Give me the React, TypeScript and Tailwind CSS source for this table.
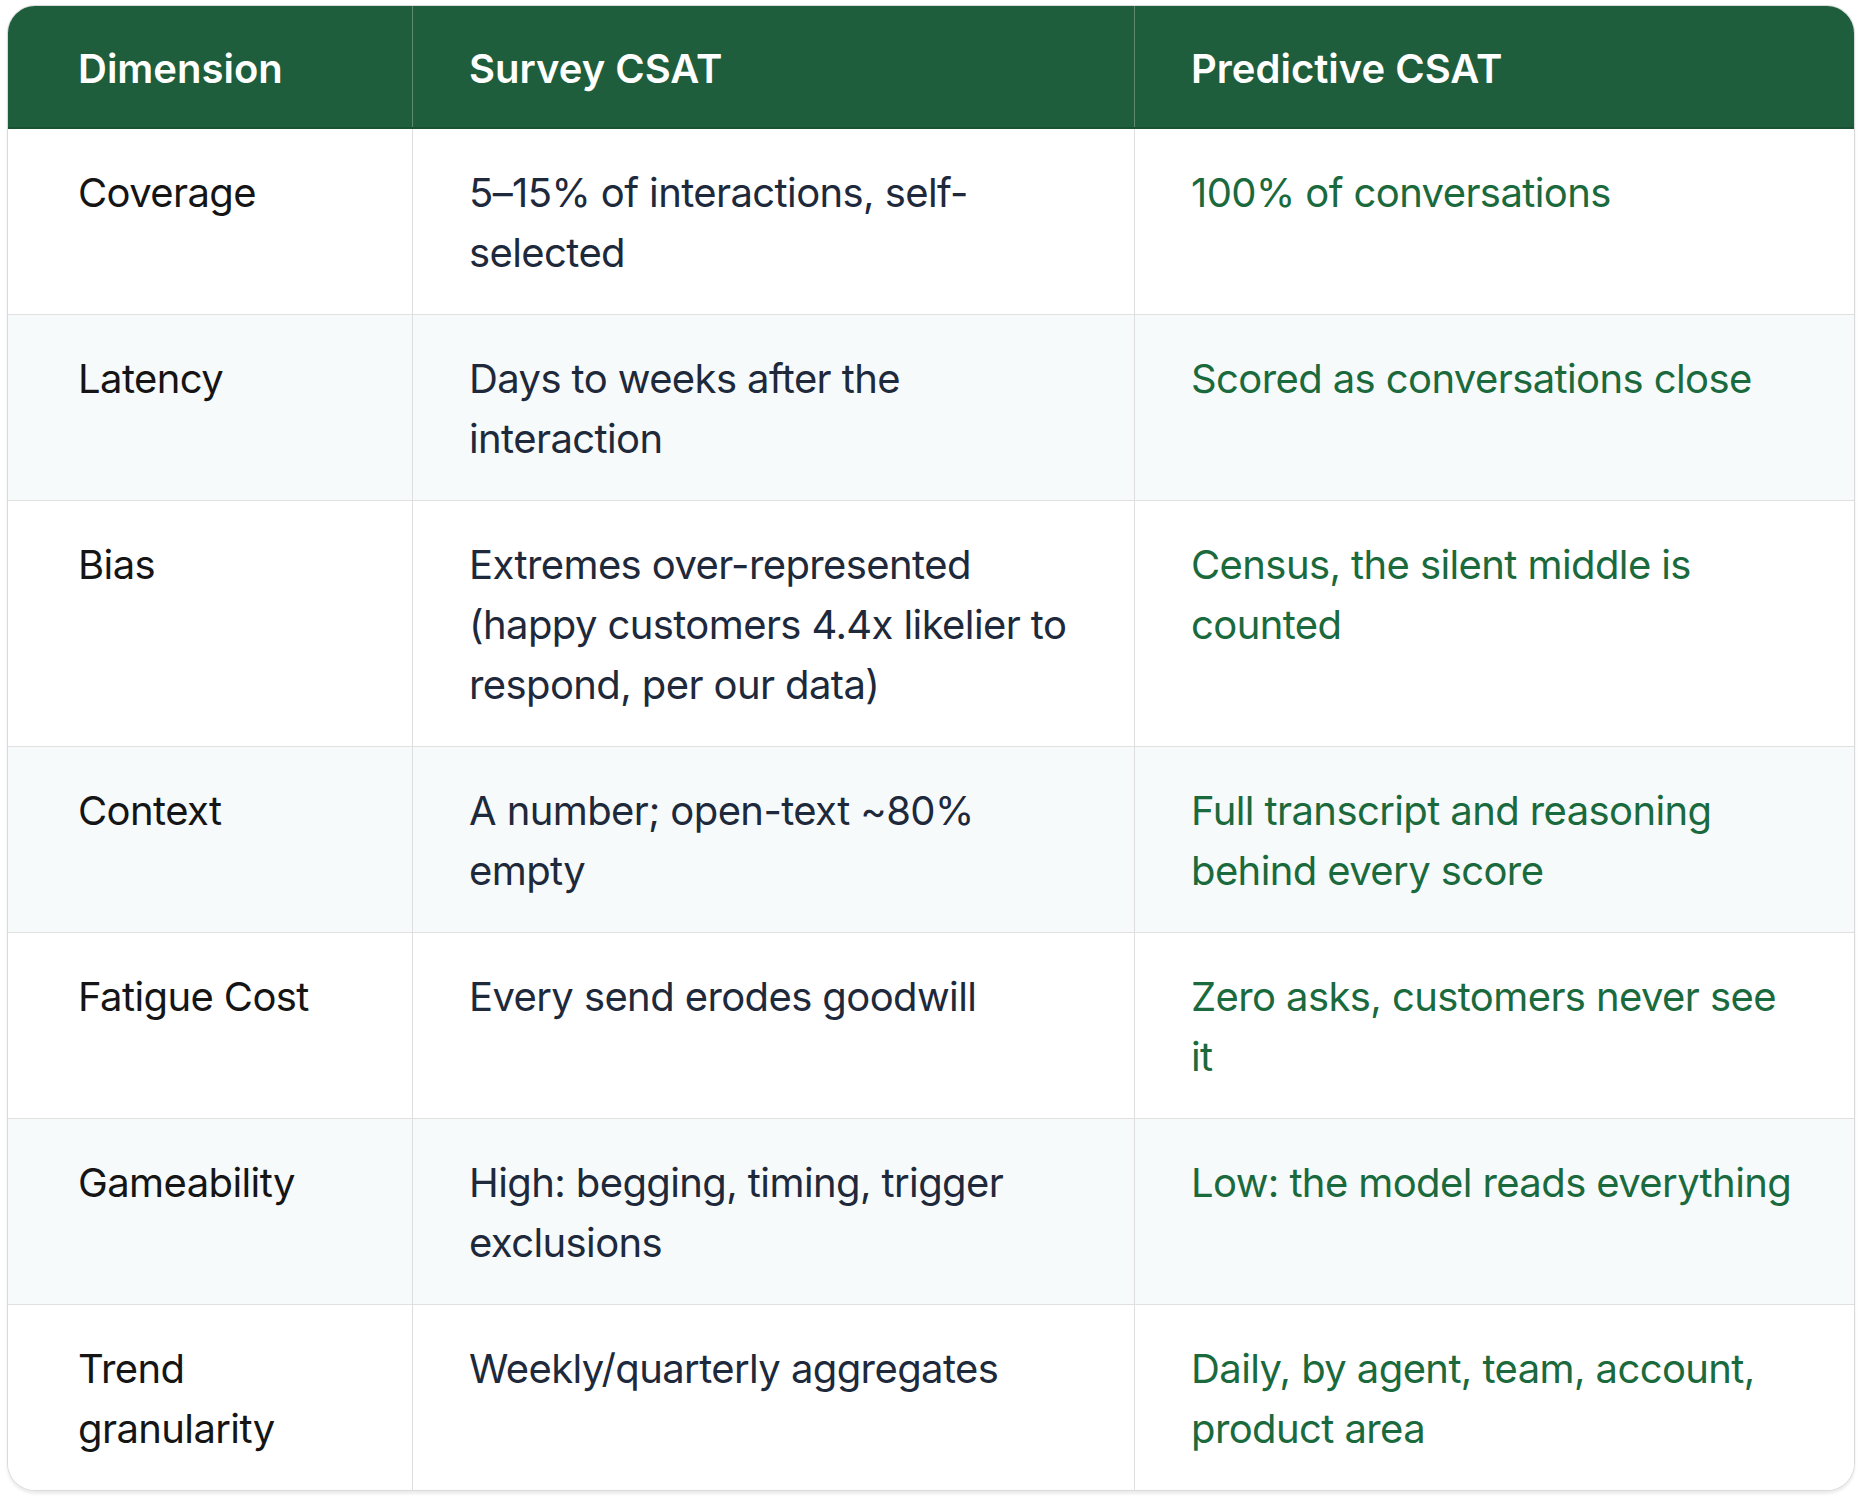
const rows: [string, string, string][] = [
  ['Coverage', '5–15% of interactions, self-selected', '100% of conversations'],
  ['Latency', 'Days to weeks after the interaction', 'Scored as conversations close'],
  [
    'Bias',
    'Extremes over-represented (happy customers 4.4x likelier to respond, per our data)',
    'Census, the silent middle is counted',
  ],
  ['Context', 'A number; open-text ~80% empty', 'Full transcript and reasoning behind every score'],
  ['Fatigue Cost', 'Every send erodes goodwill', 'Zero asks, customers never see it'],
  ['Gameability', 'High: begging, timing, trigger exclusions', 'Low: the model reads everything'],
  ['Trend granularity', 'Weekly/quarterly aggregates', 'Daily, by agent, team, account, product area'],
];

export default function App() {
  return (
    <div className="min-h-[1500px] w-[1864px] bg-white pl-[7px] pt-[5px] font-['Inter',_'Liberation_Sans',_sans-serif] text-[40px] leading-[60px]">
      <div className="w-[1848px] overflow-hidden rounded-[28px] border border-[#dadada] bg-white shadow-[0_3px_3px_rgba(0,0,0,0.08)]">
        <div className="grid grid-cols-[404px_722px_1fr] border-b-2 border-[#185232] bg-[#1e5e3c] font-semibold text-white">
          <div className="pb-[28px] pl-[70px] pr-[32px] pt-[33px]">Dimension</div>
          <div className="border-l border-[#5f8a70] pb-[28px] pl-[56px] pr-[50px] pt-[33px]">Survey CSAT</div>
          <div className="border-l border-[#5f8a70] pb-[28px] pl-[56px] pr-[50px] pt-[33px]">Predictive CSAT</div>
        </div>

        {rows.map(([dim, survey, predictive], i) => (
          <div
            key={dim}
            className={`grid grid-cols-[404px_722px_1fr] tracking-[-0.015em] ${i > 0 ? 'border-t border-[#e0e0e0]' : ''} ${
              i % 2 === 1 ? 'bg-[#f7fafa]' : 'bg-white'
            }`}
          >
            <div className="pb-[31px] pl-[70px] pr-[32px] pt-[34px] text-[#151515]">{dim}</div>
            <div className="border-l border-[#dedede] pb-[31px] pl-[56px] pr-[50px] pt-[34px] text-[#1e293b]">
              {survey}
            </div>
            <div className="border-l border-[#dedede] pb-[31px] pl-[56px] pr-[58px] pt-[34px] text-[#1a6a3d]">
              {predictive}
            </div>
          </div>
        ))}
      </div>
    </div>
  );
}
